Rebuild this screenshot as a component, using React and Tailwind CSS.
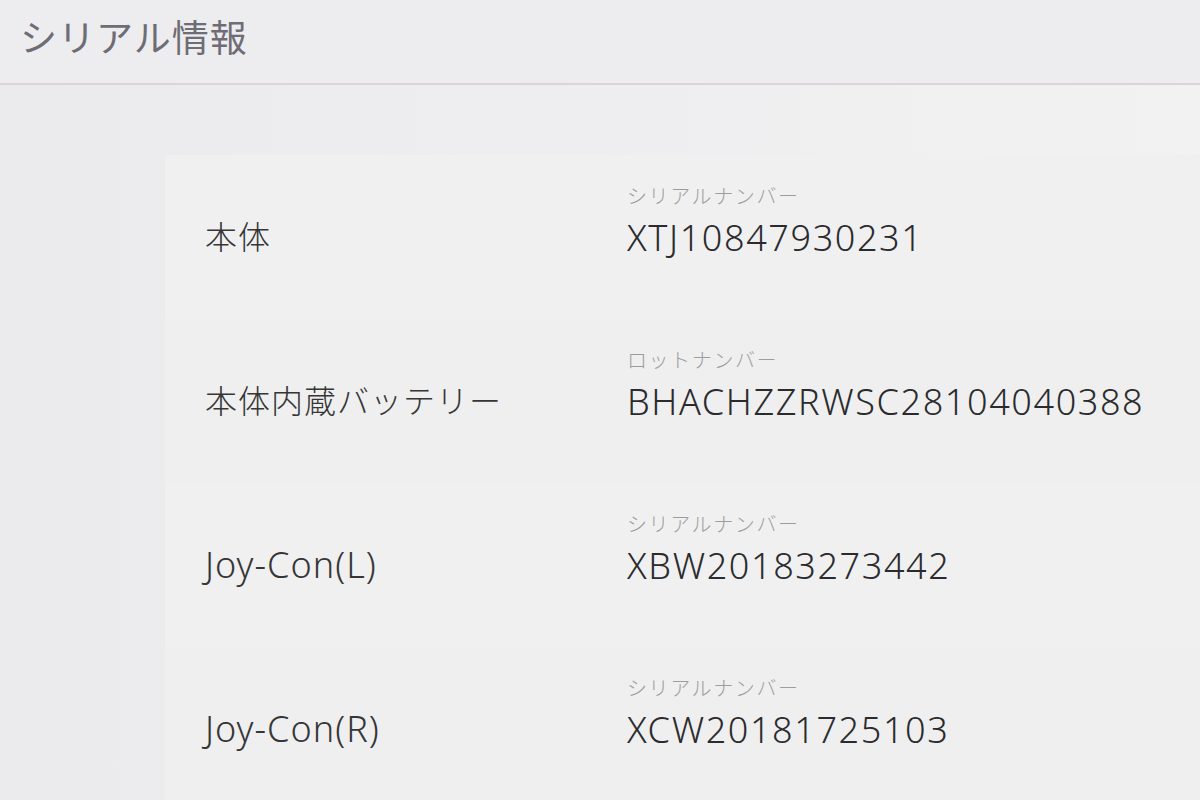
export default function App() {
  const rows = [
    { label: "本体", latin: false, sub: "シリアルナンバー", value: "XTJ10847930231" },
    { label: "本体内蔵バッテリー", latin: false, sub: "ロットナンバー", value: "BHACHZZRWSC28104040388" },
    { label: "Joy-Con(L)", latin: true, sub: "シリアルナンバー", value: "XBW20183273442" },
    { label: "Joy-Con(R)", latin: true, sub: "シリアルナンバー", value: "XCW20181725103" },
  ];
  return (
    <div
      className="w-[1200px] h-[800px] overflow-hidden flex flex-col bg-gradient-to-r from-[#ebebed] via-[#eeeef0] to-[#f2f2f2]"
      style={{ fontFamily: '"Noto Sans", "Noto Sans CJK JP", sans-serif' }}
    >
      <div className="h-[85px] shrink-0 flex items-start pt-[14px] pl-[20px] border-b-2 border-[#ddd4d9] bg-[#edecef]">
        <span className="text-[37px] leading-[48px] text-[#6e6d75] tracking-[1px]">シリアル情報</span>
      </div>
      <div className="flex flex-col pt-[70px] pl-[165px]">
        {rows.map((r, i) => (
          <div
            key={i}
            className={`h-[164px] flex items-start ${i % 2 === 0 ? "bg-[#f0f0f1]" : "bg-[#efeff0]"}`}
          >
            <div
              className={`w-[462px] pl-[40px] mt-[60px] leading-[44px] text-[#363636] font-light ${
                r.latin ? "text-[36px] tracking-[1px]" : "text-[32px] tracking-[1px]"
              }`}
            >
              {r.label}
            </div>
            <div className="flex flex-col pt-[30px]">
              <span className="text-[20px] leading-[24px] text-[#9d9d9f] tracking-[1.6px] font-light">{r.sub}</span>
              <span className="mt-[9px] text-[36px] leading-[40px] text-[#2b2b2d] tracking-[1.6px] font-light">{r.value}</span>
            </div>
          </div>
        ))}
      </div>
    </div>
  );
}
